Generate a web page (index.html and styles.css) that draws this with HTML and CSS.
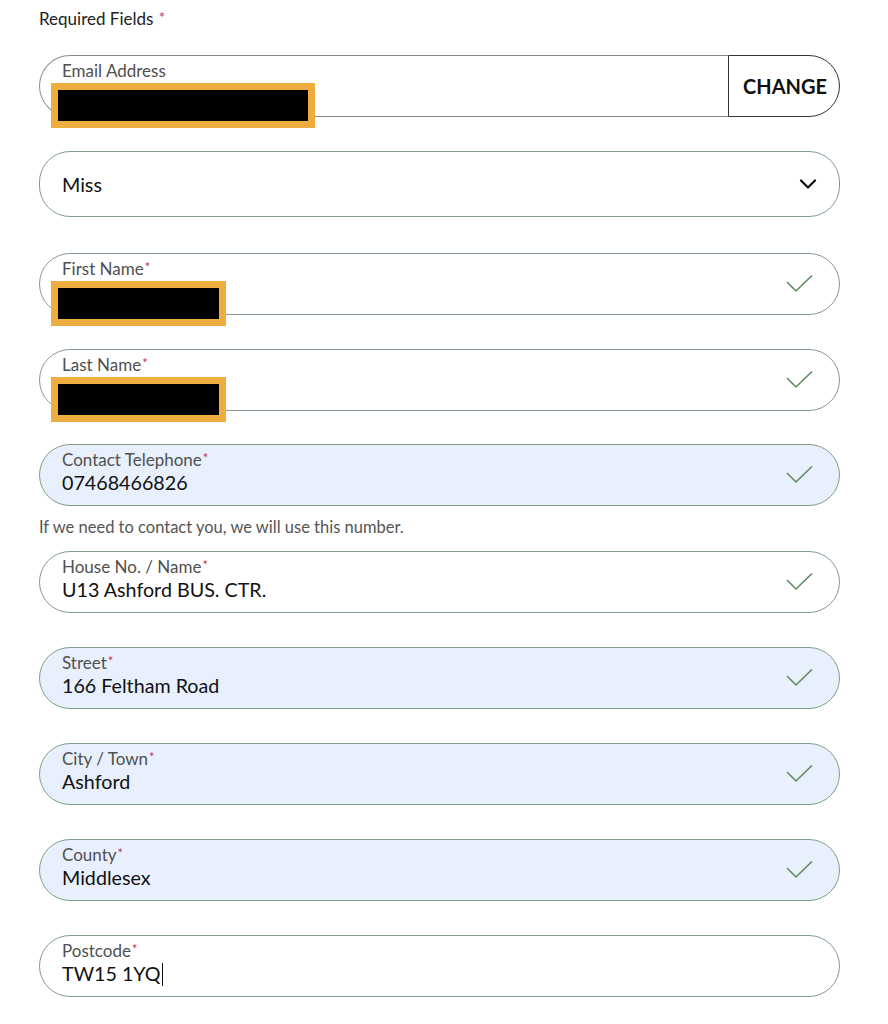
FILE: index.html
```html
<!DOCTYPE html>
<html lang="en">
<head>
<meta charset="utf-8">
<title>Details</title>
<link rel="stylesheet" href="styles.css">
</head>
<body>
<div class="form">
  <div class="required">Required Fields <span class="ast">*</span></div>

  <div class="email-row">
    <div class="field email-field">
      <div class="label">Email Address</div>
      <div class="value"></div>
      <div class="redact redact-email"></div>
    </div>
    <button class="change">CHANGE</button>
  </div>

  <div class="field select-field">
    <span class="select-value">Miss</span>
    <svg class="chevron" width="18" height="12" viewBox="0 0 18 12"><path d="M2 2.5 L9 9.5 L16 2.5" fill="none" stroke="#111" stroke-width="2.2" stroke-linecap="round" stroke-linejoin="round"/></svg>
  </div>

  <div class="field">
    <div class="label">First Name<span class="ast">*</span></div>
    <div class="value"></div>
    <div class="redact redact-name"></div>
    <svg class="check" width="30" height="20" viewBox="0 0 30 20"><path d="M2 7 L11 16 L27 0.5" fill="none" stroke="#5f8b63" stroke-width="1.6"/></svg>
  </div>

  <div class="field tight">
    <div class="label">Last Name<span class="ast">*</span></div>
    <div class="value"></div>
    <div class="redact redact-name"></div>
    <svg class="check" width="30" height="20" viewBox="0 0 30 20"><path d="M2 7 L11 16 L27 0.5" fill="none" stroke="#5f8b63" stroke-width="1.6"/></svg>
  </div>

  <div class="group">
    <div class="field filled">
      <div class="label">Contact Telephone<span class="ast">*</span></div>
      <div class="value">07468466826</div>
      <svg class="check" width="30" height="20" viewBox="0 0 30 20"><path d="M2 7 L11 16 L27 0.5" fill="none" stroke="#5f8b63" stroke-width="1.6"/></svg>
    </div>
    <div class="help">If we need to contact you, we will use this number.</div>
  </div>

  <div class="field">
    <div class="label">House No. / Name<span class="ast">*</span></div>
    <div class="value">U13 Ashford BUS. CTR.</div>
    <svg class="check" width="30" height="20" viewBox="0 0 30 20"><path d="M2 7 L11 16 L27 0.5" fill="none" stroke="#5f8b63" stroke-width="1.6"/></svg>
  </div>

  <div class="field filled">
    <div class="label">Street<span class="ast">*</span></div>
    <div class="value">166 Feltham Road</div>
    <svg class="check" width="30" height="20" viewBox="0 0 30 20"><path d="M2 7 L11 16 L27 0.5" fill="none" stroke="#5f8b63" stroke-width="1.6"/></svg>
  </div>

  <div class="field filled">
    <div class="label">City / Town<span class="ast">*</span></div>
    <div class="value">Ashford</div>
    <svg class="check" width="30" height="20" viewBox="0 0 30 20"><path d="M2 7 L11 16 L27 0.5" fill="none" stroke="#5f8b63" stroke-width="1.6"/></svg>
  </div>

  <div class="field filled">
    <div class="label">County<span class="ast">*</span></div>
    <div class="value">Middlesex</div>
    <svg class="check" width="30" height="20" viewBox="0 0 30 20"><path d="M2 7 L11 16 L27 0.5" fill="none" stroke="#5f8b63" stroke-width="1.6"/></svg>
  </div>

  <div class="group">
    <div class="field">
      <div class="label">Postcode<span class="ast">*</span></div>
      <div class="value">TW15 1YQ<span class="caret"></span></div>
    </div>
    <div class="help">This should be your billing address.</div>
  </div>
</div>
</body>
</html>
```

FILE: styles.css
```css
* { box-sizing: border-box; }

html, body {
  margin: 0;
  padding: 0;
  background: #ffffff;
}

body {
  font-family: Lato, "Open Sans", "Liberation Sans", sans-serif;
  color: #1a1a1a;
}

.form {
  width: 801px;
  margin-left: 39px;
  padding-top: 9px;
  display: flex;
  flex-direction: column;
  gap: 34px;
}

.required {
  font-size: 17px;
  line-height: 20px;
  color: #222;
  margin-bottom: -8px;
}

.required .ast {
  font-size: 15px;
  vertical-align: 2px;
}

.ast {
  color: #c2334f;
  font-size: 13px;
  vertical-align: 3px;
  line-height: 0;
  margin-left: 1px;
}

.field {
  position: relative;
  height: 62px;
  border: 1px solid #849d86;
  border-radius: 31px;
  padding: 5px 22px 0 22px;
  background: #fff;
}

.field.tight {
  margin-bottom: -1px;
}

.field.filled {
  background: #e8f0fe;
}

.label {
  font-size: 17px;
  line-height: 20px;
  color: #505050;
}

.value {
  font-size: 19.7px;
  line-height: 24px;
  height: 24px;
  margin-top: 1px;
  color: #111;
  display: flex;
  align-items: center;
}

.caret {
  display: inline-block;
  width: 0;
  height: 23px;
  border-left: 1.5px solid #111;
  margin-left: 1px;
}

.check {
  position: absolute;
  right: 24px;
  top: 21px;
}

.email-row {
  display: flex;
  height: 62px;
}

.email-field {
  flex: 1;
  border-color: #8a8a8a;
  border-right: none;
  border-radius: 31px 0 0 31px;
}

.change {
  width: 112px;
  height: 62px;
  border: 1px solid #333;
  border-radius: 0 31px 31px 0;
  background: #fff;
  font-family: Lato, "Open Sans", "Liberation Sans", sans-serif;
  font-weight: 700;
  font-size: 20px;
  color: #111;
  padding: 0 0 0 2px;
  text-align: center;
}

.select-field {
  height: 66px;
  display: flex;
  align-items: center;
  justify-content: space-between;
  padding: 0 22px 0 22px;
  margin-bottom: 2px;
}

.select-value {
  font-size: 19.7px;
  color: #111;
}

.redact {
  position: absolute;
  left: 11px;
  top: 27px;
  height: 45px;
  background: #000;
  border: 7px solid #efad3f;
}

.redact-email {
  width: 264px;
}

.redact-name {
  width: 175px;
}

.group {
  display: flex;
  flex-direction: column;
}

.help {
  font-size: 16.5px;
  line-height: 20px;
  color: #555;
  margin-top: 11px;
  margin-bottom: -20px;
}
```
